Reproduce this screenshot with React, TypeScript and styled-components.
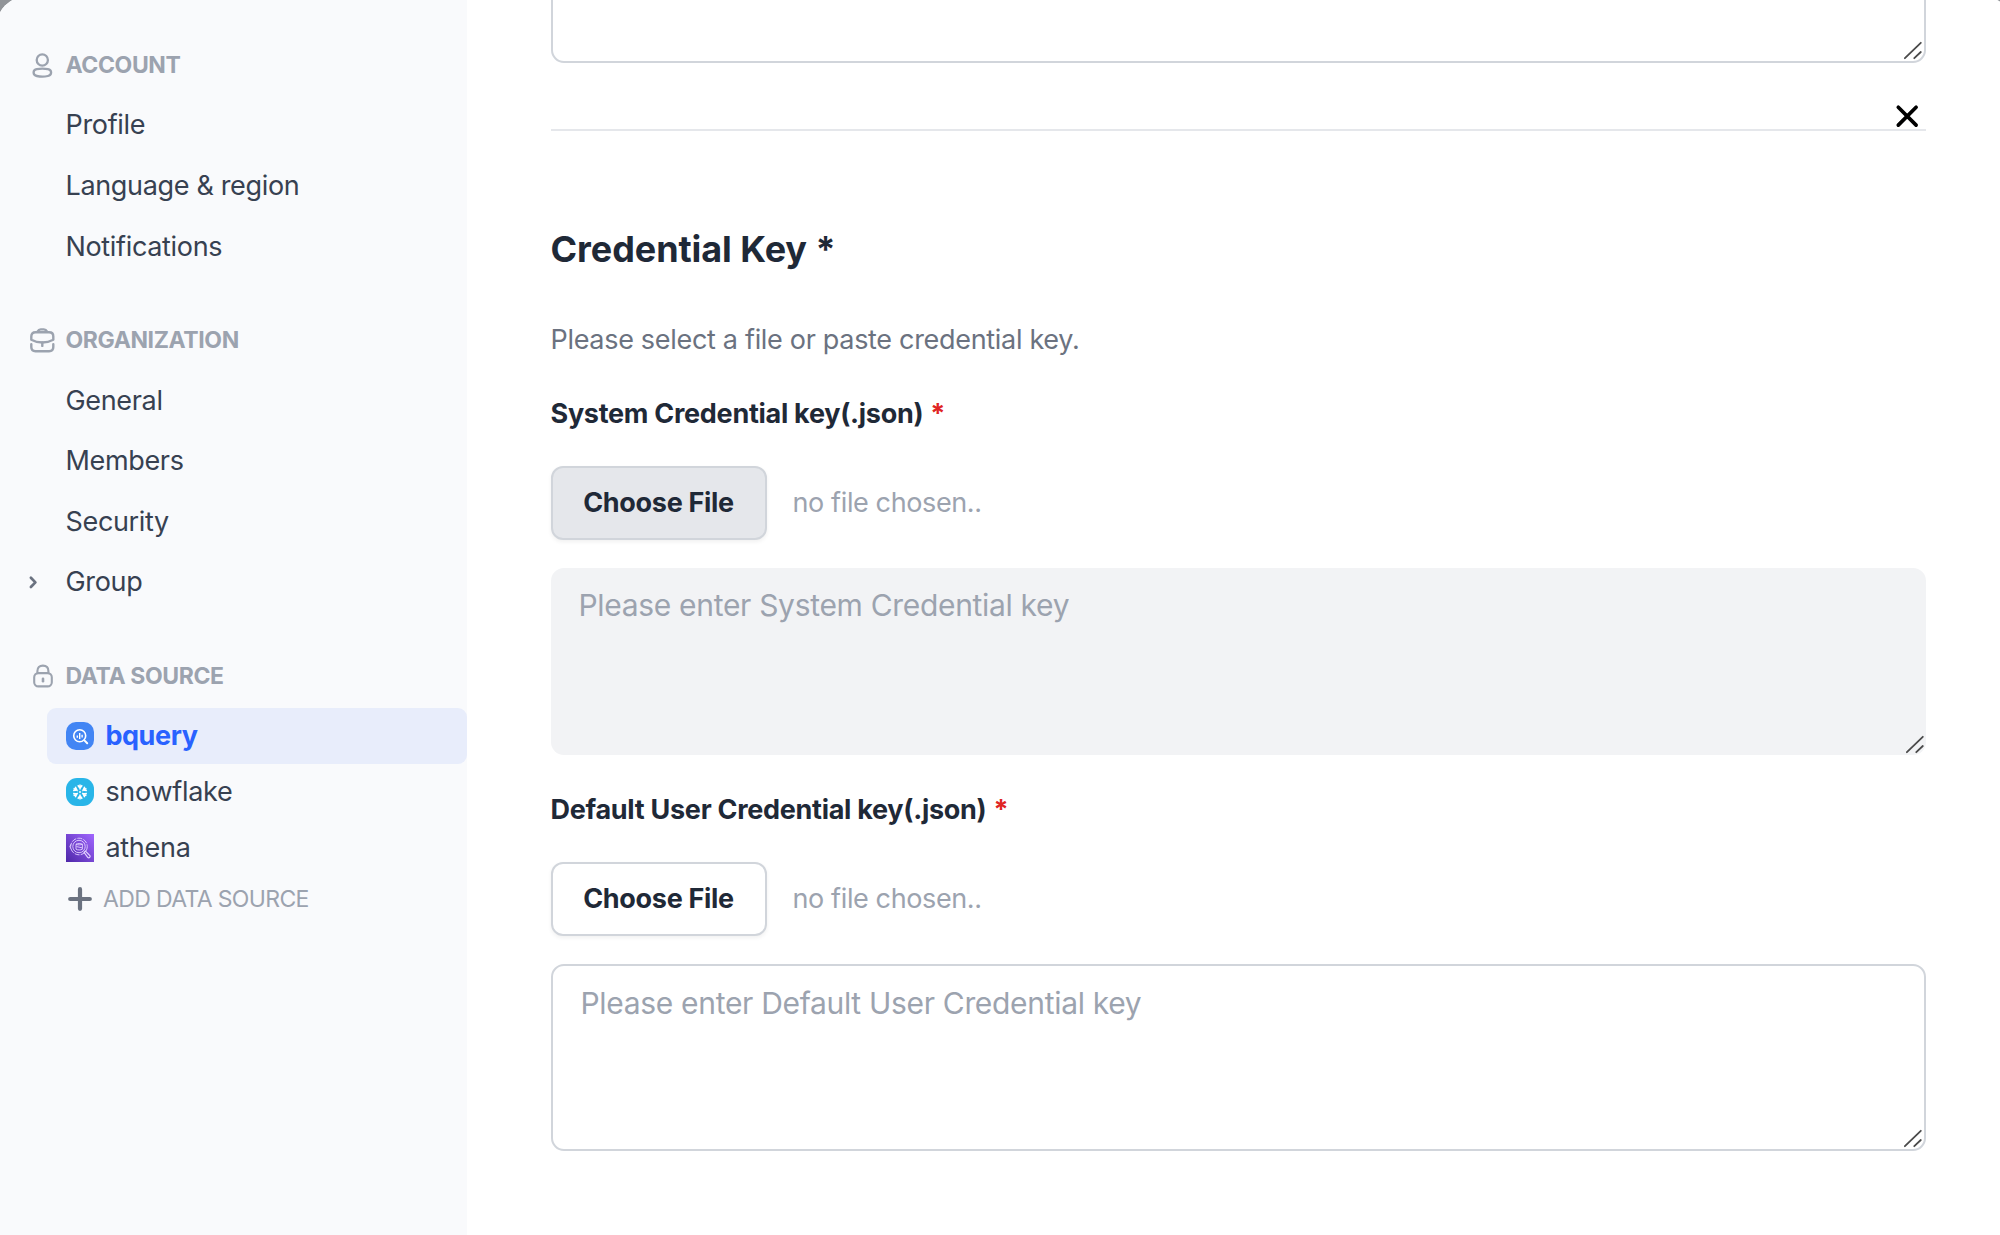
import React from 'react';
import styled, { createGlobalStyle, css } from 'styled-components';

const GlobalStyle = createGlobalStyle`
  *, *::before, *::after { box-sizing: border-box; }
  html, body { margin: 0; padding: 0; overflow: hidden; }
  body, button, textarea { font-family: Inter, "Liberation Sans", sans-serif; }
`;

const Backdrop = styled.div`
  height: 1235px;
  overflow: hidden;
  background: #919498;
`;

const Modal = styled.div`
  position: relative;
  display: flex;
  height: 1280px;
  margin: -4px -14px 0 -4px;
  border-radius: 32px;
  overflow: hidden;
  background: #ffffff;
`;

const Sidebar = styled.nav`
  display: flex;
  flex-direction: column;
  gap: 32.8px;
  width: 471px;
  flex-shrink: 0;
  padding-top: 38.6px;
  background: #f9fafc;
`;

const Section = styled.section`
  display: flex;
  flex-direction: column;
`;

const NavRow = styled.div`
  display: flex;
  align-items: center;
  height: 60.6px;
  padding-left: 30px;
  padding-bottom: 1px;
  font-size: 27px;
  letter-spacing: -0.0125em;
  color: #374151;
`;

const SectionTitle = styled(NavRow)`
  padding-bottom: 0;
  font-size: 23px;
  font-weight: 700;
  letter-spacing: -0.017em;
  color: #9ca3af;
`;

const IconSlot = styled.span`
  display: flex;
  width: 32px;
  height: 32px;
  margin-right: 7.5px;
  flex-shrink: 0;
`;

const SourceList = styled.div`
  display: flex;
  flex-direction: column;
  padding: 2px 0 0 51px;
`;

const SourceRow = styled.div<{ $active?: boolean }>`
  display: flex;
  align-items: center;
  gap: 11.4px;
  height: 56px;
  padding-left: 19px;
  border-radius: 9px;
  font-size: 27px;
  letter-spacing: -0.0105em;
  color: #374151;
  ${({ $active }) =>
    $active &&
    css`
      background: #e8edfb;
      color: #2962ff;
      font-weight: 700;
      letter-spacing: -0.015em;
    `}
`;

const SourceName = styled.span`
  padding-bottom: 2px;
`;

const AddRow = styled.div`
  display: flex;
  align-items: center;
  gap: 9px;
  height: 45px;
  padding-left: 19px;
  font-size: 23px;
  letter-spacing: -0.028em;
  color: #9ca3af;
`;

const Main = styled.main`
  flex: 1;
  display: flex;
  flex-direction: column;
  padding: 0 88px 0 83.5px;
`;

const PreviousField = styled.div`
  display: flex;
  flex-direction: column;
  margin-top: -120px;
`;

const Divider = styled.hr`
  width: 100%;
  height: 2px;
  margin: 66px 0 96.4px;
  border: 0;
  flex-shrink: 0;
  background: #e5e7eb;
`;

const Heading = styled.h2`
  margin: 0;
  font-size: 36px;
  line-height: 44px;
  font-weight: 700;
  letter-spacing: -0.002em;
  color: #1f2937;
`;

const Description = styled.p`
  margin: 50.6px 0 38px;
  font-size: 27px;
  line-height: 36px;
  letter-spacing: -0.0115em;
  color: #6b7280;
`;

const Field = styled.div`
  display: flex;
  flex-direction: column;
  & + & {
    margin-top: 37px;
  }
`;

const Label = styled.label`
  display: flex;
  gap: 7px;
  font-size: 27px;
  line-height: 36px;
  font-weight: 700;
  letter-spacing: -0.0105em;
  color: #1f2937;
`;

const Required = styled.span`
  color: #e02424;
`;

const FileRow = styled.div`
  display: flex;
  align-items: center;
  gap: 26px;
  margin: 34px 0 28px;
`;

const FileButton = styled.button<{ $hovered?: boolean }>`
  width: 216px;
  height: 74px;
  padding: 0 0 1px;
  border: 2px solid #d1d5db;
  border-radius: 12px;
  background: ${({ $hovered }) => ($hovered ? '#e5e7eb' : '#ffffff')};
  box-shadow: 0 2px 4px rgba(0, 0, 0, 0.06);
  font-size: 27px;
  font-weight: 700;
  letter-spacing: -0.0115em;
  color: #1f2937;
`;

const FileName = styled.span`
  padding-bottom: 1px;
  font-size: 27px;
  letter-spacing: -0.014em;
  color: #9ca3af;
`;

const AreaBox = styled.div<{ $filled?: boolean }>`
  position: relative;
  display: flex;
  flex-shrink: 0;
  height: 187px;
  border: ${({ $filled }) => ($filled ? '0' : '2px solid #d1d5db')};
  border-radius: 13px;
  overflow: hidden;
  background: ${({ $filled }) => ($filled ? '#f2f3f5' : '#ffffff')};
`;

const Area = styled.textarea`
  flex: 1;
  padding: 17px 28px;
  border: 0;
  outline: 0;
  resize: none;
  background: transparent;
  font-size: 30px;
  line-height: 40px;
  letter-spacing: -0.0105em;
  color: #1f2937;
  &::placeholder {
    color: #9ca3af;
    opacity: 1;
  }
`;

const Grip = styled.svg`
  position: absolute;
  right: 0;
  bottom: 0;
  width: 20px;
  height: 20px;
`;

const CloseButton = styled.button`
  position: absolute;
  top: 103.5px;
  right: 91px;
  display: flex;
  width: 32px;
  height: 32px;
  padding: 0;
  border: 0;
  background: transparent;
`;

const UserIcon = () => (
  <svg width="32" height="32" viewBox="0 0 32 32" fill="none" stroke="#9ca3af" strokeWidth="2.3">
    <circle cx="16.3" cy="11" r="5.6" />
    <path d="M7.600 23.500c0-1.900 1.400-3 3.200-3.300 3.500-.6 7.600-.6 11.100 0 1.800.3 3.200 1.400 3.200 3.300s-1.400 3.100-3.200 3.500c-3.500.7-7.600.7-11.100 0-1.800-.4-3.200-1.600-3.200-3.500z" />
  </svg>
);

const BriefcaseIcon = () => (
  <svg width="32" height="32" viewBox="0 0 32 32" fill="none" stroke="#9ca3af" strokeWidth="2.4" strokeLinecap="round" strokeLinejoin="round">
    <path d="M5.300 15.800v-3.300c0-2.700 1.400-4.200 4.200-4.200h13.600c2.800 0 4.200 1.500 4.200 4.200v3.300c-3.200 1.800-6.900 2.700-11 2.700s-7.800-.9-11-2.700z" />
    <path d="M11.600 7.600c.7-1.500 1.600-2.200 3.100-2.200h3.200c1.500 0 2.400.7 3.100 2.200" />
    <path d="M5.300 20.300v2.700c0 2.700 1.400 4.200 4.200 4.200h13.600c2.800 0 4.200-1.500 4.200-4.200v-2.700M16.300 18.500v3.400" />
  </svg>
);

const LockIcon = () => (
  <svg width="32" height="32" viewBox="0 0 32 32" fill="none" stroke="#9ca3af" strokeWidth="2.1" strokeLinecap="round">
    <rect x="8.200" y="13.100" width="17.600" height="13.300" rx="4.200" />
    <path d="M11.400 12.900v-1.800c0-3.700 2-5.500 5.500-5.500s5.500 1.800 5.500 5.500v1.800" />
    <path d="M17 18.800v2.400" strokeWidth="2.600" />
  </svg>
);

const ChevronIcon = () => (
  <svg width="32" height="32" viewBox="0 0 32 32" fill="none" stroke="#6b7280" strokeWidth="2.700" strokeLinecap="round" strokeLinejoin="round">
    <path d="M4.900 11.800l4.500 4.600-4.500 4.600" />
  </svg>
);

const BigQueryIcon = () => (
  <svg width="28" height="28" viewBox="0 0 28 28" fill="none">
    <rect width="28" height="28" rx="10" fill="#4285f4" />
    <circle cx="13.700" cy="13.700" r="6" stroke="#fff" strokeWidth="1.600" />
    <path d="M18.400 18.400l2.800 2.800" stroke="#fff" strokeWidth="2" strokeLinecap="round" />
    <path d="M11.300 13.400v2.400M13.700 11v6M16.100 12.800v2.800" stroke="#fff" strokeWidth="1.400" />
  </svg>
);

const SnowflakeIcon = () => (
  <svg width="28" height="28" viewBox="0 0 28 28" fill="none">
    <rect width="28" height="28" rx="11" fill="#29b5e8" />
    <g stroke="#fff" strokeWidth="1.500">
      {[0, 60, 120, 180, 240, 300].map((angle) => (
        <path key={angle} transform={`rotate(${angle} 14 14)`} d="M11.800 7.300l2.200 3 2.200-3M14 6.600v4.900" />
      ))}
    </g>
    <path d="M14 12.800l1.200 1.200-1.200 1.200-1.200-1.200z" fill="#fff" />
  </svg>
);

const AthenaIcon = () => (
  <svg width="28" height="28" viewBox="0 0 28 28" fill="none">
    <defs>
      <linearGradient id="athena" x1="0" y1="28" x2="28" y2="0" gradientUnits="userSpaceOnUse">
        <stop stopColor="#4d27a8" />
        <stop offset="1" stopColor="#a166ff" />
      </linearGradient>
    </defs>
    <rect width="28" height="28" fill="url(#athena)" />
    <g stroke="#e3d3ff" strokeWidth="0.900">
      <circle cx="13" cy="12.500" r="8.300" strokeDasharray="5 1.200" />
      <circle cx="13" cy="12.500" r="6.200" />
      <path d="M10 10.200v5c1.800 1 4.600 1 6.400 0v-5M10 10.200c1.800-.9 4.600-.9 6.400 0-1.800.9-4.600.9-6.400 0zM10.500 12.600l5.500 1.200M5 10.200l-1.100 2.300L5 15" />
      <path d="M18 18.400l1.400-1.400 4.500 4.500c.9 1.500-.8 2.900-2 2z" strokeWidth="1.200" />
    </g>
  </svg>
);

const PlusIcon = () => (
  <svg width="28" height="28" viewBox="0 0 28 28" stroke="#6b7280" strokeWidth="4.200" strokeLinecap="round">
    <path d="M14 4.200v19.600M4.200 14h19.600" />
  </svg>
);

const sections = [
  { title: 'ACCOUNT', icon: <UserIcon />, items: ['Profile', 'Language & region', 'Notifications'] },
  { title: 'ORGANIZATION', icon: <BriefcaseIcon />, items: ['General', 'Members', 'Security', 'Group'] },
];

const sources = [
  { name: 'bquery', icon: <BigQueryIcon />, active: true },
  { name: 'snowflake', icon: <SnowflakeIcon />, active: false },
  { name: 'athena', icon: <AthenaIcon />, active: false },
];

function TextBox({ placeholder, filled }: { placeholder?: string; filled?: boolean }) {
  return (
    <AreaBox $filled={filled}>
      <Area placeholder={placeholder} />
      <Grip viewBox="0 0 20 20" fill="none" stroke="#4b4b4b" strokeWidth="1.800" strokeLinecap="round">
        <path d="M0.900 17.200L16.800 1.800M10.300 17.200l6.500-6.200" />
      </Grip>
    </AreaBox>
  );
}

function CredentialField({ name, hovered }: { name: string; hovered?: boolean }) {
  return (
    <Field>
      <Label>
        {name} Credential key(.json)
        <Required>*</Required>
      </Label>
      <FileRow>
        <FileButton $hovered={hovered}>Choose File</FileButton>
        <FileName>no file chosen..</FileName>
      </FileRow>
      <TextBox placeholder={`Please enter ${name} Credential key`} filled={hovered} />
    </Field>
  );
}

export default function App() {
  return (
    <Backdrop>
      <GlobalStyle />
      <Modal>
        <Sidebar>
          {sections.map((section) => (
            <Section key={section.title}>
              <SectionTitle>
                <IconSlot>{section.icon}</IconSlot>
                {section.title}
              </SectionTitle>
              {section.items.map((item) => (
                <NavRow key={item}>
                  <IconSlot>{item === 'Group' && <ChevronIcon />}</IconSlot>
                  {item}
                </NavRow>
              ))}
            </Section>
          ))}
          <Section>
            <SectionTitle>
              <IconSlot>
                <LockIcon />
              </IconSlot>
              DATA SOURCE
            </SectionTitle>
            <SourceList>
              {sources.map((source) => (
                <SourceRow key={source.name} $active={source.active}>
                  {source.icon}
                  <SourceName>{source.name}</SourceName>
                </SourceRow>
              ))}
              <AddRow>
                <PlusIcon />
                ADD DATA SOURCE
              </AddRow>
            </SourceList>
          </Section>
        </Sidebar>
        <Main>
          <PreviousField>
            <TextBox />
          </PreviousField>
          <Divider />
          <Heading>Credential Key *</Heading>
          <Description>Please select a file or paste credential key.</Description>
          <CredentialField name="System" hovered />
          <CredentialField name="Default User" />
        </Main>
        <CloseButton aria-label="Close">
          <svg width="32" height="32" viewBox="0 0 32 32" stroke="#000" strokeWidth="3.700" strokeLinecap="round">
            <path d="M7.300 7.300l17.800 17.800M25.100 7.300L7.300 25.100" />
          </svg>
        </CloseButton>
      </Modal>
    </Backdrop>
  );
}
